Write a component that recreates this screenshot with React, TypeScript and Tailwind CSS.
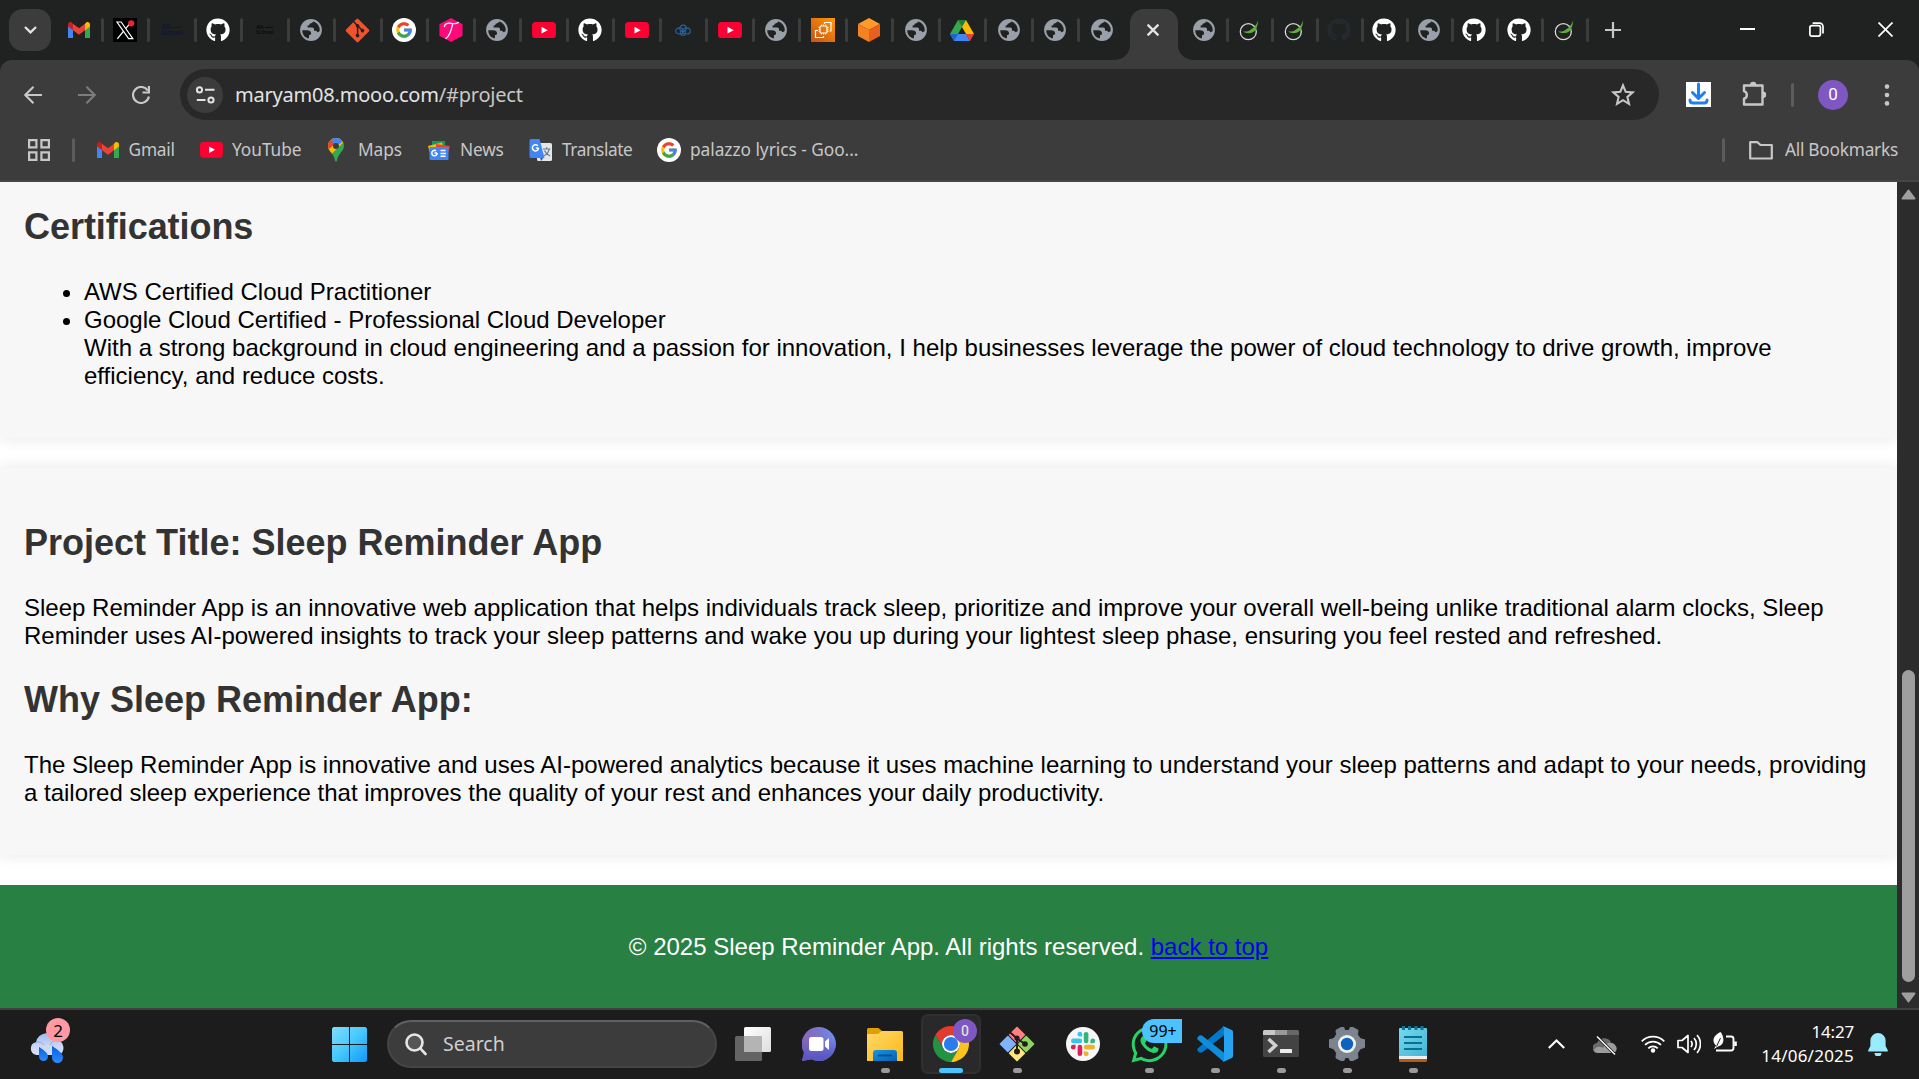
import React from "react";
import { FaGithub, FaGitAlt, FaWhatsapp } from "react-icons/fa";

type P = { s?: number };

const Gmail = ({ s = 22 }: P) => (
  <svg width={s} height={s * 0.76} viewBox="0 0 22 16.6">
    <path d="M0 2.6 5 6.3V16.6H1.5A1.5 1.5 0 0 1 0 15.1Z" fill="#4285f4" />
    <path d="M22 2.6 17 6.3V16.6H20.5A1.5 1.5 0 0 0 22 15.1Z" fill="#34a853" />
    <path d="M17 1.6V8.2L22 4.5V2.4C22 .4 19.8-.7 18.2.5Z" fill="#fbbc04" />
    <path d="M5 8.2V1.6L11 6.1 17 1.6V8.2L11 12.7Z" fill="#ea4335" />
    <path d="M0 2.4V4.5L5 8.2V1.6L3.8.5C2.2-.7 0 .4 0 2.4Z" fill="#c5221f" />
  </svg>
);

const YouTube = ({ s = 24 }: P) => (
  <svg width={s} height={s * 0.68} viewBox="0 0 24 16.4">
    <rect width="24" height="16.4" rx="3.6" fill="#ff0033" />
    <path d="M9.5 4.8 15.7 8.2 9.5 11.6Z" fill="#fff" />
  </svg>
);

const Google = () => (
  <svg width="24" height="24" viewBox="0 0 24 24">
    <circle cx="12" cy="12" r="12" fill="#fff" />
    <g transform="translate(2.6 2.6) scale(.392)">
      <path fill="#FFC107" d="M43.6 20H42V20H24v8h11.3C33.7 32.7 29.2 36 24 36c-6.600 0-12-5.400-12-12s5.400-12 12-12c3.100 0 5.800 1.200 8 3l5.600-5.600C34 6.100 29.300 4 24 4 13 4 4 13 4 24s9 20 20 20 20-9 20-20c0-1.300-.1-2.700-.4-4Z" />
      <path fill="#EA4335" d="M6.300 14.700l6.600 4.800C14.700 15.100 19 12 24 12c3.100 0 5.800 1.200 8 3l5.600-5.600C34 6.100 29.300 4 24 4 16.300 4 9.700 8.300 6.300 14.700Z" />
      <path fill="#34A853" d="M24 44c5.200 0 9.900-2 13.400-5.200l-6.200-5.200C29.200 35.100 26.700 36 24 36c-5.200 0-9.600-3.300-11.300-7.900l-6.500 5C9.500 39.600 16.200 44 24 44Z" />
      <path fill="#4285F4" d="M43.600 20H24v8h11.300c-.8 2.200-2.200 4.200-4.100 5.600l6.200 5.200C37 39.200 44 34 44 24c0-1.300-.1-2.700-.4-4Z" />
    </g>
  </svg>
);

const Globe = () => (
  <svg width="22" height="22" viewBox="0 0 22 22">
    <circle cx="11" cy="11" r="10.900" fill="#9aa0a9" />
    <path d="M13.200 2.500C12.300 3.900 11 4.600 9.700 4.700 9.600 6 8.700 6.500 7.600 6.500V8.600H12.200C13.300 8.600 14 9.400 14 10.400V11.700H15.300C16.500 11.700 17 12.300 17.300 13.200 18.300 13.100 19.100 12.600 19.700 11.900A8.800 8.800 0 0 0 13.200 2.500Z" fill="#202221" />
    <path d="M2.200 11.300H7C9.600 11.300 11 12.500 11.100 14.300 11.100 15.600 10.200 16.200 9 16.200V18.100C9 19 8.800 19.400 8.400 19.600A8.900 8.900 0 0 1 2.200 11.300Z" fill="#202221" />
  </svg>
);

const Github = ({ dark }: { dark?: boolean }) => <FaGithub size={24} color={dark ? "#24292e" : "#fff"} />;

const AltSchool = ({ blue }: { blue?: boolean }) => (
  <div
    className={
      blue
        ? "flex w-[21px] flex-col font-['Inter',sans-serif] text-[6.5px] leading-[6.5px] font-bold text-[#111633]"
        : "flex w-[17px] flex-col font-['Inter',sans-serif] text-[5.2px] leading-[5.2px] font-bold text-[#0b0c0c]"
    }
  >
    <span className="flex items-end gap-px">
      Alt<i className="mb-[2px] h-px flex-1 bg-current" />
    </span>
    <span>School</span>
  </div>
);

const XLogo = () => (
  <svg width="24" height="24" viewBox="0 0 24 24">
    <rect width="24" height="24" fill="#000" />
    <path d="M4 4H8.200L19.800 20.600H15.600Z" fill="none" stroke="#fff" strokeWidth="1.200" />
    <path d="M18.500 3.600 12.900 10.400M10.700 13 4.300 20.800" stroke="#fff" strokeWidth="1.200" />
    <circle cx="18.200" cy="5.300" r="3.100" fill="#f4212e" />
  </svg>
);

const PinkHex = () => (
  <svg width="24" height="24" viewBox="0 0 24 24">
    <path d="M12 .8 22.800 6.600V17.400L12 23.200 1.200 17.400V6.600Z" fill="#ff0a78" stroke="#ff0a78" strokeWidth="1.500" strokeLinejoin="round" />
    <path d="M5.500 8.500C5.500 5.500 9 4.800 12 5.300 15 5.900 17.500 5.900 19.300 4.400M13.700 5.600C12.500 11 11.500 17.500 7 20.300" fill="none" stroke="#fff" strokeWidth="1.300" strokeLinecap="round" />
  </svg>
);

const Knot = () => (
  <svg width="16" height="13" viewBox="0 0 18 14" fill="none" stroke="#2d6396" strokeWidth="1.300">
    <ellipse cx="5" cy="7.500" rx="4.200" ry="3.400" />
    <ellipse cx="13" cy="7.500" rx="4.200" ry="3.400" />
    <circle cx="9" cy="4.600" r="3.600" />
    <circle cx="9" cy="9.400" r="3" stroke="#235a9c" />
  </svg>
);

const Ec2 = () => (
  <svg width="24" height="24" viewBox="0 0 24 24">
    <defs>
      <linearGradient id="ec2" x1="0" y1="1" x2="1" y2="0">
        <stop stopColor="#c8511b" />
        <stop offset="1" stopColor="#f90" />
      </linearGradient>
    </defs>
    <rect width="24" height="24" fill="url(#ec2)" />
    <g fill="none" stroke="#fff" strokeWidth="1.200">
      <rect x="9" y="8" width="7" height="7" rx="1" />
      <path d="M10.500 6.500V8M12.500 6.500V8M14.500 6.500V8M10.500 15V16.500M12.500 15V16.500M14.500 15V16.500M7.500 9.500H9M7.500 11.500H9M7.500 13.500H9M16 9.500H17.500M16 11.500H17.500M16 13.500H17.500" strokeWidth=".8" />
      <path d="M13.500 6V4.500H20V13H18.500M7 12.500H4.500V19.500H12.500V18" />
    </g>
  </svg>
);

const Cube = () => (
  <svg width="22" height="24" viewBox="0 0 22 24">
    <path d="M11 0 22 6 11 12 0 6Z" fill="#ff9a2b" />
    <path d="M0 6 11 12V24L0 18Z" fill="#f58220" />
    <path d="M22 6 11 12V24L22 18Z" fill="#e8601c" />
  </svg>
);

const Drive = () => (
  <svg width="24" height="21" viewBox="0 0 24 21">
    <path d="M8 0 0 14 4 21 12 7Z" fill="#34a853" />
    <path d="M16 0H8L12 7 16 14H24Z" fill="#fbbc04" />
    <path d="M8 0H16L12 7Z" fill="#188038" />
    <path d="M0 14H8L4 21Z" fill="#1967d2" />
    <path d="M8 14H16L20 21H4Z" fill="#4285f4" />
    <path d="M16 14H24L20 21Z" fill="#ea4335" />
  </svg>
);

const Leaf = () => (
  <svg width="20" height="22" viewBox="0 0 20 22">
    <circle cx="9.300" cy="12.700" r="8" fill="none" stroke="#d7dad8" strokeWidth="1.300" />
    <path d="M19.200 1.500C18.500 8 16.500 13.500 11.500 14 8.500 14.300 6 14.200 4.200 12.200 7 13 9 12.400 11 11.200 13.500 9.300 17 7.500 19.200 1.500Z" fill="#5fad3a" />
  </svg>
);

const leftTabs: React.ReactNode[] = [
  <Gmail />, <XLogo />, <AltSchool blue />, <Github />, <AltSchool />, <Globe />,
  <FaGitAlt size={27} color="#f4502a" />, <Google />, <PinkHex />, <Globe />, <YouTube />, <Github />,
  <YouTube />, <Knot />, <YouTube />, <Globe />, <Ec2 />, <Cube />, <Globe />, <Drive />, <Globe />, <Globe />, <Globe />,
];
const rightTabs: React.ReactNode[] = [
  <Globe />, <Leaf />, <Leaf />, <Github dark />, <Github />, <Globe />, <Github />, <Github />, <Leaf />,
];

const Sep = ({ hide }: { hide?: boolean }) => (
  <i className={hide ? "hidden" : "absolute -right-[1.5px] top-[3px] h-6 w-[3px] rounded-sm bg-[#3c3c3c]"} />
);

function TabStrip() {
  return (
    <div className="flex h-[60px] items-start bg-[#202221]">
      <div className="mt-[9px] ml-[9px] grid h-[42px] w-[42px] place-items-center rounded-[14px] bg-[#3c3c3c]">
        <svg width="13" height="8" viewBox="0 0 13 8" fill="none" stroke="#e3e3e3" strokeWidth="2.300">
          <path d="M1 1 6.500 6.300 12 1" />
        </svg>
      </div>
      <div className="mt-[15px] ml-[4.500px] flex">
        {leftTabs.map((t, i) => (
          <div key={i} className="relative flex h-[30px] w-[46.5px] shrink-0 items-center justify-center">
            {t}
            <Sep hide={i === leftTabs.length - 1} />
          </div>
        ))}
      </div>
      <div className="relative mt-[9px] ml-[5px] flex h-[51px] w-12 shrink-0 items-center justify-center rounded-t-[14px] bg-[#3c3c3c] pr-[2px] pb-[9px]">
        <svg className="absolute bottom-0 -left-[15px]" width="15" height="15"><path d="M15 0V15H0A15 15 0 0 0 15 0Z" fill="#3c3c3c" /></svg>
        <svg className="absolute -right-[15px] bottom-0" width="15" height="15"><path d="M0 0V15H15A15 15 0 0 1 0 0Z" fill="#3c3c3c" /></svg>
        <svg width="12" height="12" viewBox="0 0 12 12" stroke="#e3e3e3" strokeWidth="2.300"><path d="M.6.600 11.400 11.400M11.400.600.600 11.400" /></svg>
      </div>
      <div className="mt-[15px] ml-[4px] flex">
        {rightTabs.map((t, i) => (
          <div key={i} className="relative flex h-[30px] w-[45px] shrink-0 items-center justify-center pr-[2px]">
            {t}
            <Sep />
          </div>
        ))}
      </div>
      <svg className="mt-[22px] ml-[18px]" width="16" height="16" viewBox="0 0 16 16" stroke="#c7c7c7" strokeWidth="2.200"><path d="M8 0V16M0 8H16" /></svg>
      <div className="mt-[22px] mr-[26px] ml-auto flex gap-[54px]">
        <svg width="15" height="15" viewBox="0 0 15 15"><path d="M0 7H15" stroke="#fff" strokeWidth="2" /></svg>
        <svg width="15" height="15" viewBox="0 0 15 15" fill="none" stroke="#fff" strokeWidth="1.700">
          <rect x=".9" y="3.600" width="10.500" height="10.500" rx="2" />
          <path d="M3.600 1.200H10.500A3.500 3.500 0 0 1 14 4.700V11.500" />
        </svg>
        <svg width="15" height="15" viewBox="0 0 15 15" stroke="#fff" strokeWidth="1.700"><path d="M.5.500 14.500 14.500M14.500.500.500 14.500" /></svg>
      </div>
    </div>
  );
}

function Toolbar() {
  return (
    <div className="bg-[#202221]">
      <div className="flex h-[69px] items-center rounded-t-[12px] bg-[#3c3c3c]">
        <svg className="ml-6" width="18" height="18" viewBox="0 0 18 18" fill="none" stroke="#c7c7c7" strokeWidth="2.100"><path d="M18 9H1.500M9.500.800 1.300 9 9.500 17.200" /></svg>
        <svg className="ml-9" width="18" height="18" viewBox="0 0 18 18" fill="none" stroke="#7c7c7c" strokeWidth="2.100"><path d="M0 9H16.500M8.500.800 16.700 9 8.500 17.200" /></svg>
        <svg className="ml-9" width="18" height="18" viewBox="0 0 18 18" fill="none" stroke="#c7c7c7" strokeWidth="2.200">
          <path d="M16.900 10.500A8 8 0 1 1 15.700 4.500M16.900 0V6.500H10.500" />
        </svg>
        <div className="ml-[30px] flex h-[51px] w-[1479px] items-center rounded-full bg-[#282828] pr-6 pl-[7px]">
          <div className="grid h-9 w-9 place-items-center rounded-full bg-[#3c3c3c]">
            <svg width="19" height="18" viewBox="0 0 19 18" fill="none" stroke="#e3e3e3" strokeWidth="2">
              <circle cx="3.500" cy="3.800" r="2.600" /><path d="M9 3.800H18.500M.8 14H9.500" /><circle cx="15" cy="14" r="2.600" />
            </svg>
          </div>
          <span className="ml-3 font-['Noto_Sans','Open_Sans',sans-serif] text-[20px] tracking-[-0.210px] whitespace-nowrap text-[#e3e3e3]">
            maryam08.mooo.com<span className="text-[#c7c7c7]">/#project</span>
          </span>
          <svg className="ml-auto" width="24" height="23" viewBox="0 0 24 23" fill="none" stroke="#c7c7c7" strokeWidth="2.100">
            <path d="M12 2.300 14.700 8.800 21.700 9.400 16.400 14 18 20.900 12 17.200 6 20.900 7.600 14 2.300 9.400 9.300 8.800Z" />
          </svg>
        </div>
        <svg className="ml-[27px]" width="25" height="25" viewBox="0 0 25 25">
          <rect width="25" height="25" fill="#fff" />
          <path d="M12.500 2V15M6.500 10.500 12.500 16.500 18.500 10.500M4 18C4 20 5 21 7 21H18C20 21 21 20 21 18" fill="none" stroke="#1f7ef2" strokeWidth="3" strokeLinecap="round" strokeLinejoin="round" />
        </svg>
        <svg className="mb-[2px] ml-[31px]" width="25" height="25" viewBox="0 0 25 25" fill="none" stroke="#c7c7c7" strokeWidth="2.400">
          <path d="M2 4.500H20.500V23.500H2V17.700A3.900 3.900 0 0 0 2 10.200Z" strokeLinejoin="round" />
          <path d="M8 4A3.200 3.200 0 0 1 14.400 4ZM21 10.500A3.200 3.200 0 0 1 21 16.900Z" fill="#c7c7c7" stroke="none" />
        </svg>
        <i className="ml-[24px] h-6 w-[3px] rounded-sm bg-[#5c5c5c]" />
        <div className="ml-6 grid h-[30px] w-[30px] place-items-center rounded-full bg-[#7e57c2] font-['Roboto',sans-serif] text-[17px] leading-none text-white">0</div>
        <svg className="ml-9" width="6" height="22" viewBox="0 0 6 22" fill="#c7c7c7"><circle cx="3" cy="2.600" r="2.300" /><circle cx="3" cy="11" r="2.300" /><circle cx="3" cy="19.400" r="2.300" /></svg>
      </div>
    </div>
  );
}

const MapsPin = () => (
  <svg width="16" height="24" viewBox="0 0 16 24">
    <defs><clipPath id="pin"><path d="M8 0A8 8 0 0 0 0 8C0 13 6 15.500 7 22.500 7.200 24 8.800 24 9 22.500 10 15.500 16 13 16 8A8 8 0 0 0 8 0Z" /></clipPath></defs>
    <g clipPath="url(#pin)">
      <rect width="16" height="24" fill="#34a853" />
      <path d="M16 0V4L3 16.500 0 12V0Z" fill="#fbbc04" />
      <path d="M0 0H8V5L1 11-2 8Z" fill="#ea4335" />
      <path d="M2.500 2 8 8 15 3.500 12 0H4Z" fill="#4285f4" />
    </g>
    <circle cx="8" cy="8" r="3" fill="#3c3c3c" />
  </svg>
);

const News = () => (
  <svg width="22" height="19" viewBox="0 0 22 19">
    <path d="M4 0H17V8H4Z" fill="#0f9d58" />
    <path d="M0 5 14 1.500 16 9 2 12Z" fill="#fbbc04" />
    <path d="M8 3 22 5 20 12H8Z" fill="#ea4335" />
    <rect x="1.500" y="6" width="19" height="13" rx="1" fill="#4285f4" />
    <path d="M9 12H6.500M9.200 12A2.700 2.700 0 1 1 8 9.800M12.500 9.500H17.500M12.500 12.500H18M12.500 15.200H17.500" fill="none" stroke="#fff" strokeWidth="1.500" />
  </svg>
);

const Translate = () => (
  <svg width="24" height="24" viewBox="0 0 24 24">
    <rect x="8" y="5" width="15" height="18" rx="1.500" fill="#e4e6e9" />
    <path d="M14 11H21.500M17.700 9.300V11M20 11.500C19.500 14.500 17 17 14.500 18M15.500 12.500C16.500 15 18.500 17 21 18" fill="none" stroke="#607d8b" strokeWidth="1.200" />
    <path d="M11 19H15L12 23Z" fill="#1a56d6" />
    <path d="M2 1H10.500L15.500 20H2A1.500 1.500 0 0 1 .5 18.500V2.500A1.500 1.500 0 0 1 2 1Z" fill="#4285f4" />
    <path d="M9.600 10H6.800M9.600 10A3.100 3.100 0 1 1 8.800 7.700" fill="none" stroke="#fff" strokeWidth="1.500" />
  </svg>
);

function Bookmarks() {
  return (
    <div className="flex h-[53px] items-center border-b-2 border-[#464646] bg-[#3c3c3c] pb-[9px] font-['Noto_Sans','Open_Sans',sans-serif] text-[17.300px] whitespace-nowrap text-[#c7c7c7]">
      <svg className="ml-7" width="22" height="22" viewBox="0 0 22 22" fill="none" stroke="#c7c7c7" strokeWidth="2.200">
        <path d="M1.100 1.100H8.400V8.400H1.100ZM13.400 1.100H20.900V8.400H13.400ZM1.100 13.400H8.400V20.900H1.100ZM13.400 13.400H20.900V20.900H13.400Z" />
      </svg>
      <i className="ml-[22px] h-6 w-[3px] rounded-sm bg-[#5c5c5c]" />
      <span className="ml-[22px] flex w-[103px] items-center"><Gmail /><b className="mb-px ml-[9.500px] font-normal tracking-[-0.2px]">Gmail</b></span>
      <span className="flex w-[128px] items-center"><YouTube s={23} /><b className="mb-px ml-[9px] font-normal tracking-[-0.05px]">YouTube</b></span>
      <span className="flex w-[100px] items-center"><MapsPin /><b className="mb-px ml-[14px] font-normal tracking-[-0.1px]">Maps</b></span>
      <span className="flex w-[101px] items-center"><News /><b className="mb-px ml-[10px] font-normal tracking-[-0.2px]">News</b></span>
      <span className="flex w-[128px] items-center"><Translate /><b className="mb-px ml-[9px] font-normal tracking-[-0.450px]">Translate</b></span>
      <span className="flex items-center"><Google /><b className="mb-px ml-[9px] font-normal tracking-[-0.030px]">palazzo lyrics - Goo...</b></span>
      <i className="ml-auto h-6 w-[3px] rounded-sm bg-[#5c5c5c]" />
      <svg className="ml-6" width="24" height="19" viewBox="0 0 24 19" fill="none" stroke="#c7c7c7" strokeWidth="2.200" strokeLinejoin="round"><path d="M1.200 1.200H8.500L11.500 4H22.800V17.500H1.200Z" /></svg>
      <span className="mr-[21px] mb-px ml-3 tracking-[-0.250px]">All Bookmarks</span>
    </div>
  );
}

function WebPage() {
  return (
    <div className="flex h-[826px] bg-white">
      <div className="flex-1 overflow-hidden font-['Liberation_Sans',Arial,sans-serif] text-[24px] leading-[28px] text-black">
        <section className="h-[256px] bg-[#f7f7f7] px-6 pt-6 shadow-[0_0_15px_rgba(0,0,0,0.1)]">
          <h2 className="text-[36px] leading-[41px] font-bold tracking-[-0.050px] text-[#333]">Certifications</h2>
          <ul className="mt-[31px] list-disc pl-[60px]">
            <li>AWS Certified Cloud Practitioner</li>
            <li>
              Google Cloud Certified - Professional Cloud Developer
              <br />
              With a strong background in cloud engineering and a passion for innovation, I help businesses leverage the power of cloud technology to drive growth, improve efficiency, and reduce costs.
            </li>
          </ul>
        </section>
        <section className="mt-[30px] h-[387px] bg-[#f7f7f7] px-6 pt-[54px] shadow-[0_0_15px_rgba(0,0,0,0.1)]">
          <h2 className="text-[36px] leading-[41px] font-bold text-[#333]">Project Title: Sleep Reminder App</h2>
          <p className="mt-[31px]">
            Sleep Reminder App is an innovative web application that helps individuals track sleep, prioritize and improve your overall well-being unlike traditional alarm clocks, Sleep Reminder uses AI-powered insights to track your sleep patterns and wake you up during your lightest sleep phase, ensuring you feel rested and refreshed.
          </p>
          <h2 className="mt-[29px] text-[36px] leading-[41px] font-bold text-[#333]">Why Sleep Reminder App:</h2>
          <p className="mt-[31px]">
            The Sleep Reminder App is innovative and uses AI-powered analytics because it uses machine learning to understand your sleep patterns and adapt to your needs, providing a tailored sleep experience that improves the quality of your rest and enhances your daily productivity.
          </p>
        </section>
        <footer className="relative mt-[30px] h-[123px] bg-[#288042] pt-[48px] text-center text-white">
          © 2025 Sleep Reminder App. All rights reserved. <a className="text-[#0000ee] underline">back to top</a>
        </footer>
      </div>
      <div className="flex w-[22px] flex-col items-center bg-[#2c2c2c] pt-[7px] pb-[5px]">
        <svg width="15" height="11" viewBox="0 0 15 11"><path d="M7.500 1.500 13.500 9.500H1.500Z" fill="#9f9f9f" stroke="#9f9f9f" strokeWidth="2" strokeLinejoin="round" /></svg>
        <div className="mt-[470px] h-[312px] w-[13px] rounded-full bg-[#9f9f9f]" />
        <svg className="mt-auto" width="15" height="11" viewBox="0 0 15 11"><path d="M7.500 9.500 1.500 1.500H13.500Z" fill="#9f9f9f" stroke="#9f9f9f" strokeWidth="2" strokeLinejoin="round" /></svg>
      </div>
    </div>
  );
}

const TaskView = () => (
  <svg width="36" height="34" viewBox="0 0 36 34">
    <defs>
      <linearGradient id="tv" x1="0" y1="0" x2="1" y2="1"><stop stopColor="#fff" /><stop offset="1" stopColor="#dedede" /></linearGradient>
    </defs>
    <rect x="9" y="0" width="27" height="25" rx="1.500" fill="url(#tv)" />
    <rect x="0" y="9" width="27" height="25" rx="1.500" fill="#646464" />
    <path d="M9 9H27V25H9Z" fill="#b4b4b4" />
  </svg>
);

const Meet = () => (
  <svg width="34" height="34" viewBox="0 0 34 34">
    <defs>
      <linearGradient id="mt" x1="0" y1=".3" x2="1" y2=".1"><stop stopColor="#8d65b5" /><stop offset=".5" stopColor="#7a74cc" /><stop offset="1" stopColor="#6f8ff0" /></linearGradient>
      <linearGradient id="mt2" x1="0" y1="0" x2="0" y2="1"><stop offset=".3" stopColor="#5b5fc7" stopOpacity="0" /><stop offset=".9" stopColor="#5b57c4" /></linearGradient>
    </defs>
    <path d="M17.500 0A17 17 0 1 1 9.500 32.300L0 34 2 25.500A17 17 0 0 1 17.500 0Z" fill="url(#mt)" />
    <path d="M17.500 0A17 17 0 1 1 9.500 32.300L0 34 2 25.500A17 17 0 0 1 17.500 0Z" fill="url(#mt2)" />
    <rect x="7" y="10" width="14.500" height="14" rx="2.500" fill="#fff" />
    <path d="M23 14.500 27 11V23L23 19.500Z" fill="#fff" />
  </svg>
);

const Folder = () => (
  <svg width="36" height="33" viewBox="0 0 36 33">
    <defs>
      <linearGradient id="fo" x1="0" y1="0" x2="1" y2="1"><stop stopColor="#ffd86b" /><stop offset="1" stopColor="#fcb914" /></linearGradient>
      <linearGradient id="fb" x1="0" y1="0" x2="1" y2="1"><stop stopColor="#1397e6" /><stop offset="1" stopColor="#0a5fb0" /></linearGradient>
    </defs>
    <path d="M0 1.500A1.500 1.500 0 0 1 1.500 0H11.500L15 3V10H0Z" fill="#e0a000" />
    <path d="M0 6H11L15 3H34.500A1.500 1.500 0 0 1 36 4.500V33H0Z" fill="url(#fo)" />
    <path d="M6 33V25A3 3 0 0 1 9 22H27A3 3 0 0 1 30 25V33Z" fill="url(#fb)" />
    <path d="M11 27.500H25" stroke="#0a4a8c" strokeWidth="1.800" />
  </svg>
);

const Chrome = () => (
  <svg width="36" height="36" viewBox="2 2 44 44">
    <path d="M24 13H43.050A22 22 0 0 0 4.950 13L14.470 29.500A11 11 0 0 1 24 13Z" fill="#e33b2e" />
    <path d="M4.950 13 14.470 29.500A11 11 0 0 0 33.530 29.500L24 46A22 22 0 0 1 4.950 13Z" fill="#229342" />
    <path d="M24 46 33.530 29.500A11 11 0 0 0 24 13H43.050A22 22 0 0 1 24 46Z" fill="#fcc31e" />
    <circle cx="24" cy="24" r="11" fill="#fff" />
    <circle cx="24" cy="24" r="8.700" fill="#2b7bea" />
  </svg>
);

const GitBash = () => (
  <svg width="36" height="36" viewBox="0 0 36 36">
    <g transform="rotate(45 18 18)">
      <rect x="5.500" y="5.500" width="12" height="12" rx=".8" fill="#ff8080" />
      <rect x="18.500" y="5.500" width="12" height="12" rx=".8" fill="#8fd463" />
      <rect x="5.500" y="18.500" width="12" height="12" rx=".8" fill="#80b3ff" />
      <rect x="18.500" y="18.500" width="12" height="12" rx=".8" fill="#ffe680" />
    </g>
    <path d="M10 5.500 18 12.500V26M18 12.500 26 18" fill="none" stroke="#241c1c" strokeWidth="1.900" />
    <circle cx="18" cy="12" r="2.600" fill="#241c1c" /><circle cx="18" cy="25.500" r="3" fill="#241c1c" /><circle cx="26" cy="18" r="2.800" fill="#241c1c" />
  </svg>
);

const Slack = () => {
  const arm = (c: string, r: number) => (
    <g transform={`rotate(${r} 17 17)`} fill={c}>
      <rect x="5" y="11.600" width="11.200" height="4.600" rx="2.300" />
      <path d="M16.200 10V7.300A2.400 2.400 0 1 0 13.800 9.900H16.200Z" transform="translate(0 -.3)" />
    </g>
  );
  return (
    <svg width="34" height="34" viewBox="0 0 34 34">
      <circle cx="17" cy="17" r="17" fill="#f6f6f6" />
      {arm("#36c5f0", 0)}{arm("#2eb67d", 90)}{arm("#ecb22e", 180)}{arm("#e01e5a", 270)}
    </svg>
  );
};

const VSCode = () => (
  <svg width="36" height="36" viewBox="0 0 36 36">
    <path d="M27 0V9.300L5 26.500 2.800 26.700.300 24.500V22.800Z" fill="#0179cb" />
    <path d="M27 36V26.700L5 9.500 2.800 9.300.300 11.500V13.200Z" fill="#0e8ddb" />
    <path d="M26.500.200 34.800 4A2 2 0 0 1 36 5.800V30.200A2 2 0 0 1 34.800 32L26.500 35.800C25.500 36 27 35 27 33V3C27 1 25.500 0 26.500.200Z" fill="#26a3f0" />
  </svg>
);

const Terminal = () => (
  <svg width="36" height="28" viewBox="0 0 36 28">
    <rect width="36" height="27" rx="1.500" fill="#434343" />
    <path d="M0 5V1.500A1.500 1.500 0 0 1 1.500 0H12V5Z" fill="#c9c9c9" /><path d="M12 0H24V5H12Z" fill="#999" /><path d="M24 0H34.500A1.500 1.500 0 0 1 36 1.500V5H24Z" fill="#686868" />
    <path d="M5.500 9 12.500 15.500 5.500 22" fill="none" stroke="#d0d0d0" strokeWidth="3.600" />
    <rect x="17" y="19" width="12" height="4" rx=".6" fill="#ececec" />
  </svg>
);

const Gear = () => (
  <svg width="36" height="34" viewBox="0 0 36 34">
    <path d="M13 0H14.500L16 3.500H20L21.500 0H23L29 3.200 28.500 7.500 31 11.500 36 13V20L31 22 28.500 26 29 31 23 34H21.500L19.500 30.500H16.500L14.500 34H13L7 31 7.500 26 5 22 0 20V13L5 11.500 7.500 7.500 7 3.200Z" fill="#7c858f" stroke="#7c858f" strokeLinejoin="round" />
    <circle cx="18" cy="17" r="9" fill="#f2f2f2" /><circle cx="18" cy="17" r="6.200" fill="#0c63c0" />
  </svg>
);

const Notepad = () => (
  <svg width="28" height="36" viewBox="0 0 28 36">
    <defs><linearGradient id="np" x1="0" y1="0" x2="1" y2="1"><stop stopColor="#76daee" /><stop offset="1" stopColor="#42b4d6" /></linearGradient></defs>
    <rect y="26" width="28" height="10" rx="1.500" fill="#b85a10" />
    <rect y="28" width="28" height="5" fill="#eee" />
    <path d="M0 3A1 1 0 0 1 1 2H27A1 1 0 0 1 28 3V30H0Z" fill="url(#np)" />
    <path d="M4.500 0V4M10.500 0V4M17 0V4M23 0V4" stroke="#0f7596" strokeWidth="3" />
    <path d="M5 11H23M5 17H23M5 23H23" stroke="#0a6f93" strokeWidth="2" />
  </svg>
);

const apps: { icon: React.ReactNode; run?: boolean; active?: boolean }[] = [
  { icon: <TaskView /> },
  { icon: <Meet /> },
  { icon: <Folder />, run: true },
  { icon: <Chrome />, active: true },
  { icon: <GitBash />, run: true },
  { icon: <Slack /> },
  { icon: <><FaWhatsapp size={41} color="#25d366" /><span className="absolute top-[9px] left-[26px] grid h-6 w-[40px] place-items-center rounded-l-full rounded-r-[10px] bg-[#4cc2ff] pl-[2px] font-['Noto_Sans',sans-serif] text-[16px] leading-none text-black">99+</span></>, run: true },
  { icon: <VSCode />, run: true },
  { icon: <Terminal />, run: true },
  { icon: <Gear />, run: true },
  { icon: <Notepad />, run: true },
];

function Taskbar() {
  return (
    <div className="flex h-[71px] items-start border-t-2 border-[#404040] bg-[#1c1c1c] font-['Noto_Sans','Open_Sans',sans-serif]">
      <div className="relative mt-[23px] ml-[30px] h-[30px] w-9">
        <svg width="36" height="30" viewBox="0 0 36 30">
          <defs>
            <linearGradient id="cl" x1="0" y1="0" x2="0" y2="1"><stop stopColor="#9db9ee" /><stop offset=".6" stopColor="#cbd8f3" /><stop offset="1" stopColor="#d6e0f6" /></linearGradient>
            <linearGradient id="dr" x1="0" y1="0" x2="0" y2="1"><stop stopColor="#0b5fe0" /><stop offset="1" stopColor="#2a8cff" /></linearGradient>
          </defs>
          <path d="M6.500 22A6.500 6.500 0 0 1 6 9.200 11 11 0 0 1 27 7 8 8 0 0 1 29 22Z" fill="url(#cl)" />
          <path d="M6 9.200C9 8.500 12 9.500 14 12M20 12C21 9 24 7 27 7" fill="none" stroke="#8dacea" />
          <path d="M9 14C12 16 18 19.500 18 23.500A4.500 4.500 0 0 1 9 23.500Z" fill="url(#dr)" />
          <path d="M22 13C26 15.500 33 20 33 24.500A5.300 5.300 0 0 1 22 24.500Z" fill="url(#dr)" />
        </svg>
        <span className="absolute -top-[15px] left-4 grid h-6 w-6 place-items-center rounded-full bg-[#ff99a4] text-[17px] leading-none text-black">2</span>
      </div>
      <svg className="mt-[17px] ml-[266px]" width="35" height="35" viewBox="0 0 35 35">
        <defs><linearGradient id="wn" x1="0" y1="0" x2="35" y2="35" gradientUnits="userSpaceOnUse"><stop stopColor="#82dcff" /><stop offset=".5" stopColor="#45c8fb" /><stop offset="1" stopColor="#0f98fb" /></linearGradient></defs>
        <path d="M1.500 0H17V17H0V1.500ZM18 0H33.500L35 1.500V17H18ZM0 18H17V35H1.500L0 33.500ZM18 18H35V33.500L33.500 35H18Z" fill="url(#wn)" />
      </svg>
      <div className="mt-[10px] ml-5 flex h-12 w-[330px] items-center rounded-full border-2 border-[#464646] border-t-[#606060] bg-[#3c3c3c] pl-4">
        <svg width="22" height="23" viewBox="0 0 22 23" fill="none" stroke="#e6e6e6" strokeWidth="2.600" strokeLinecap="round"><circle cx="9.500" cy="9.500" r="8" fill="#555" /><path d="M15.500 15.700 20.500 21" /></svg>
        <span className="ml-4 text-[19.500px] text-[#cfcfcf]">Search</span>
      </div>
      <div className="ml-[3px] flex">
        {apps.map((a, i) => (
          <div key={i} className="relative grid h-[68px] w-[66px] place-items-center">
            {a.active && <i className="absolute top-1 left-[3px] h-[60px] w-[60px] rounded-[7px] border-2 border-[#303030] bg-[#292929]" />}
            <div className="z-10 grid h-[68px] place-items-center">{a.icon}</div>
            {a.active && <span className="absolute top-[9px] left-[35px] z-20 grid h-6 w-6 place-items-center rounded-full bg-[#7e57c2] font-['Roboto',sans-serif] text-[14px] leading-none font-medium text-[#ddd]">0</span>}
            {a.active && <i className="absolute bottom-[5px] left-[21px] z-10 h-[5px] w-6 rounded-full bg-[#4cc2ff]" />}
            {a.run && <i className="absolute bottom-[5px] left-[29px] h-[5px] w-[9px] rounded-full bg-[#9a9a9a]" />}
          </div>
        ))}
      </div>
      <div className="ml-auto flex h-[68px] items-center">
        <svg width="17" height="10" viewBox="0 0 17 10" fill="none" stroke="#fff" strokeWidth="2.100"><path d="M.8 9 8.500 1.500 16.200 9" /></svg>
        <svg className="mt-[3px] ml-[28px]" width="24" height="20" viewBox="0 0 24 20">
          <path d="M5 17A5 5 0 0 1 4 7 8 8 0 0 1 18 6Z" fill="#6b6b6b" /><path d="M1 14C3 10 7 10 10 12 12 7 19 5 22 9 25 12 24 17 19 17H5C3 17 1.500 16 1 14Z" fill="#9c9c9c" />
          <path d="M4 .500 22 18.500" stroke="#1c1c1c" strokeWidth="3" /><path d="M4 .500 22 18.500" stroke="#fff" strokeWidth="1.400" />
        </svg>
        <svg className="ml-6" width="24" height="18" viewBox="0 0 24 18" fill="none" stroke="#fff" strokeWidth="1.700">
          <path d="M.7 6.300A16 16 0 0 1 23.300 6.300M4 9.900A11.300 11.300 0 0 1 20 9.900M7.300 13.300A6.600 6.600 0 0 1 16.700 13.300" /><circle cx="12" cy="15.500" r="2.200" fill="#fff" stroke="none" />
        </svg>
        <svg className="ml-3" width="24" height="20" viewBox="0 0 24 20" fill="none" stroke="#fff" strokeWidth="1.700" strokeLinejoin="round">
          <path d="M1 6.500H5L11 1.500V18.500L5 13.500H1Z" /><path d="M14 7A5 5 0 0 1 14 13M17 4A9 9 0 0 1 17 16M20 1.200A13 13 0 0 1 20 18.800" />
        </svg>
        <svg className="mb-1 ml-3" width="24" height="20" viewBox="0 0 24 20" fill="none" stroke="#fff" strokeWidth="1.900">
          <path d="M13 4.500H18A2.500 2.500 0 0 1 20.500 7V16A2.500 2.500 0 0 1 18 18.500H3" /><path d="M22.500 9.500V14" strokeWidth="2.600" />
          <path d="M7.500 0C11 4 12.500 13 5 14.500L1 17 3 13.500C-2 9 1 3 7.500 0Z" fill="#fff" stroke="none" /><path d="M3.500 14.500 7.500 6" stroke="#1c1c1c" strokeWidth="1" />
        </svg>
        <div className="ml-[24px] w-[93px] text-right text-[17px] leading-6 whitespace-nowrap text-white">
          <div className="tracking-[-0.200px]">14:27</div>
          <div className="tracking-[0.230px]">14/06/2025</div>
        </div>
        <svg className="mr-[31px] ml-[14px]" width="20" height="23" viewBox="0 0 20 23" fill="#99ebff">
          <path d="M10 0A7.600 7.600 0 0 1 17.600 7.600V13L19.800 17.200C20 18 19.700 18.500 19 18.500H1C.3 18.500 0 18 .2 17.200L2.400 13V7.600A7.600 7.600 0 0 1 10 0ZM6.500 20H13.500A3.500 3.500 0 0 1 6.500 20Z" />
        </svg>
      </div>
    </div>
  );
}

export default function App() {
  return (
    <div className="flex h-[1079px] w-[1919px] flex-col overflow-hidden bg-[#202221]">
      <TabStrip />
      <Toolbar />
      <Bookmarks />
      <WebPage />
      <Taskbar />
    </div>
  );
}
